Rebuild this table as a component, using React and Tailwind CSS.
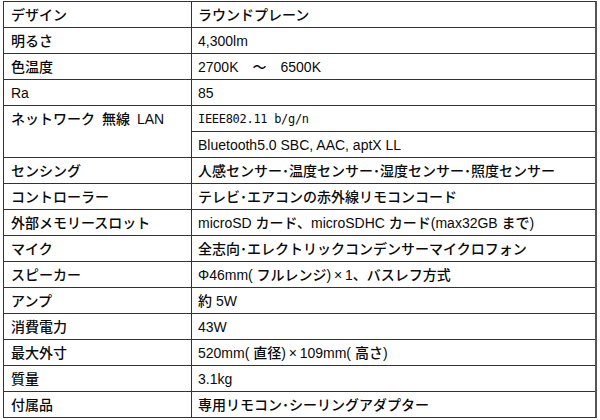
import React from "react";

const rows = [
  ["デザイン", "ラウンドプレーン"],
  ["明るさ", "4,300lm"],
  ["色温度", "2700K　～　6500K"],
  ["Ra", "85"],
  ["ネットワーク\u2002無線\u2002LAN", null],
  ["センシング", "人感センサー･温度センサー･湿度センサー･照度センサー"],
  ["コントローラー", "テレビ･エアコンの赤外線リモコンコード"],
  ["外部メモリースロット", "microSD カード、microSDHC カード(max32GB まで)"],
  ["マイク", "全志向･エレクトリックコンデンサーマイクロフォン"],
  ["スピーカー", "Φ46mm( フルレンジ)\u2009×\u20091、バスレフ方式"],
  ["アンプ", "約 5W"],
  ["消費電力", "43W"],
  ["最大外寸", "520mm( 直径)\u2009×\u2009109mm( 高さ)"],
  ["質量", "3.1kg"],
  ["付属品", "専用リモコン･シーリングアダプター"],
];

function Cell({ children, className = "" }) {
  return (
    <div className={"bg-white flex items-center " + className}>{children}</div>
  );
}

export default function App() {
  return (
    <div
      className="w-[600px] h-[420px] bg-white pt-px pl-[3px] text-[#0a0a0a]"
      style={{ fontFamily: '"Liberation Sans", "Noto Sans CJK JP", sans-serif' }}
    >
      <div className="w-[594px] grid grid-cols-[187px_1fr] auto-rows-[25px] gap-px bg-[#333] border border-[#333] border-r-2 border-r-[#555] text-[14px] font-medium leading-none">
        {rows.map(([label, value]) =>
          value === null ? (
            <React.Fragment key={label}>
              <div className="row-span-2 bg-white">
                <div className="h-[25px] flex items-center pl-[7px]">{label}</div>
              </div>
              <Cell className="pl-[6px] font-['DejaVu_Sans_Mono'] font-normal text-[12px] tracking-[-0.3px]">
                IEEE802.11 b/g/n
              </Cell>
              <Cell className="pl-[6px]">Bluetooth5.0 SBC, AAC, aptX LL</Cell>
            </React.Fragment>
          ) : (
            <React.Fragment key={label}>
              <Cell className="pl-[7px]">{label}</Cell>
              <Cell className="pl-[6px]">{value}</Cell>
            </React.Fragment>
          )
        )}
      </div>
    </div>
  );
}
